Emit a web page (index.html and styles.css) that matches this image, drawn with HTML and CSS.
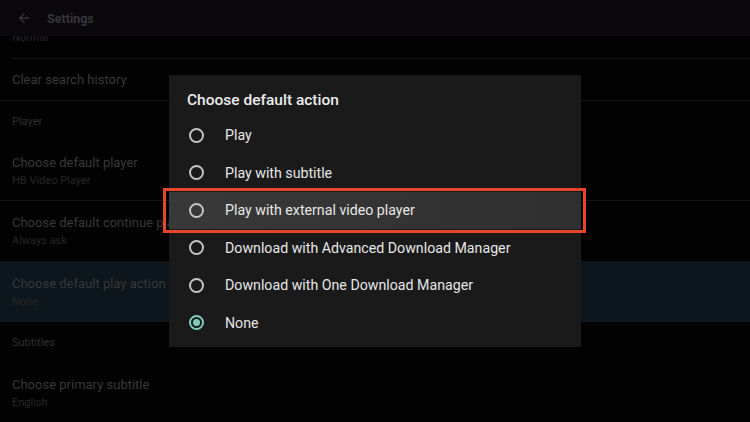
FILE: index.html
```html
<!DOCTYPE html>
<html lang="en">
<head>
<meta charset="utf-8">
<title>Settings</title>
<link rel="stylesheet" href="styles.css">
</head>
<body>
<div class="screen">
  <header class="topbar">
    <svg class="back" viewBox="0 0 24 24" width="16" height="16"><path d="M20 11H7.83l5.59-5.59L12 4l-8 8 8 8 1.41-1.41L7.83 13H20v-2z" fill="currentColor"/></svg>
    <span class="topbar-title">Settings</span>
  </header>
  <main class="list">
    <div class="clipped"><span class="sub clipped-text">Normal</span></div>
    <div class="divider inset"></div>
    <div class="item single"><span class="title">Clear search history</span></div>
    <div class="divider"></div>
    <div class="section">Player</div>
    <div class="item short"><span class="title">Choose default player</span><span class="sub">HB Video Player</span></div>
    <div class="divider"></div>
    <div class="item"><span class="title">Choose default continue play action</span><span class="sub">Always ask</span></div>
    <div class="item focused"><span class="title">Choose default play action</span><span class="sub">None</span></div>
    <div class="section tall">Subtitles</div>
    <div class="item"><span class="title">Choose primary subtitle</span><span class="sub">English</span></div>
  </main>
  <div class="scrim">
    <div class="dialog">
      <div class="dialog-title">Choose default action</div>
      <div class="options">
        <div class="option"><span class="radio"></span><span class="label">Play</span></div>
        <div class="option"><span class="radio"></span><span class="label">Play with subtitle</span></div>
        <div class="option active"><span class="radio"></span><span class="label">Play with external video player</span><span class="callout"></span></div>
        <div class="option"><span class="radio"></span><span class="label">Download with Advanced Download Manager</span></div>
        <div class="option"><span class="radio"></span><span class="label">Download with One Download Manager</span></div>
        <div class="option"><span class="radio checked"></span><span class="label">None</span></div>
      </div>
    </div>
  </div>
</div>
</body>
</html>
```

FILE: styles.css
```css
html, body {
  margin: 0;
  padding: 0;
  background: #020202;
}
body {
  font-family: Roboto, "Liberation Sans", sans-serif;
  width: 750px;
  height: 422px;
  overflow: hidden;
}
.screen {
  position: relative;
  width: 750px;
  height: 422px;
  overflow: hidden;
  display: flex;
  flex-direction: column;
}
.topbar {
  height: 36px;
  flex: none;
  background: #0a080c;
  display: flex;
  align-items: center;
  padding-left: 16px;
  color: #363538;
}
.back {
  display: block;
  margin-right: 15px;
}
.topbar-title {
  font-weight: 700;
  font-size: 12.5px;
  color: #363538;
}
.list {
  display: flex;
  flex-direction: column;
}
.clipped {
  height: 22px;
  overflow: hidden;
  padding-left: 12px;
}
.clipped-text {
  display: block;
  margin-top: -7px;
  line-height: 16px;
}
.divider {
  height: 1px;
  background: #151515;
  flex: none;
}
.divider.inset {
  margin-left: 12px;
}
.item {
  height: 60px;
  padding-left: 12px;
  display: flex;
  flex-direction: column;
  justify-content: center;
  box-sizing: border-box;
  flex: none;
}
.item.short {
  height: 59px;
}
.item.single {
  height: 41px;
}
.item.focused {
  background: #0c161c;
  height: 61px;
}
.title {
  font-size: 13px;
  line-height: 19px;
  color: #383838;
  white-space: nowrap;
}
.sub {
  font-size: 11px;
  line-height: 17px;
  color: #272727;
  white-space: nowrap;
}
.section {
  height: 40px;
  padding-left: 12px;
  display: flex;
  align-items: center;
  font-size: 11px;
  color: #2f2f2f;
  flex: none;
}
.section.tall {
  height: 41px;
}
.scrim {
  position: absolute;
  inset: 0;
  display: flex;
  align-items: center;
  justify-content: center;
}
.dialog {
  width: 412px;
  height: 272px;
  background: #1a1a1a;
  box-sizing: border-box;
  padding-top: 15px;
  display: flex;
  flex-direction: column;
}
.dialog-title {
  padding-left: 18px;
  font-size: 15.5px;
  font-weight: 500;
  color: #ececec;
  line-height: 20px;
  height: 26.5px;
}
.options {
  display: flex;
  flex-direction: column;
}
.option {
  position: relative;
  height: 37.5px;
  display: flex;
  align-items: center;
  padding-left: 20px;
}
.option.active {
  background: linear-gradient(90deg, #393939, #2f2f2f);
}
.radio {
  width: 15px;
  height: 15px;
  box-sizing: border-box;
  border: 2px solid #c4c4c4;
  border-radius: 50%;
  flex: none;
  margin-right: 21px;
  display: flex;
  align-items: center;
  justify-content: center;
}
.radio.checked {
  border-color: #7fcbbd;
}
.radio.checked::after {
  content: "";
  width: 7px;
  height: 7px;
  border-radius: 50%;
  background: #7fcbbd;
}
.label {
  font-size: 14.2px;
  color: #e6e6e6;
  white-space: nowrap;
}
.callout {
  position: absolute;
  left: -6px;
  right: -5px;
  top: -4px;
  bottom: -4px;
  border: 3px solid #e8462a;
  pointer-events: none;
}
```
